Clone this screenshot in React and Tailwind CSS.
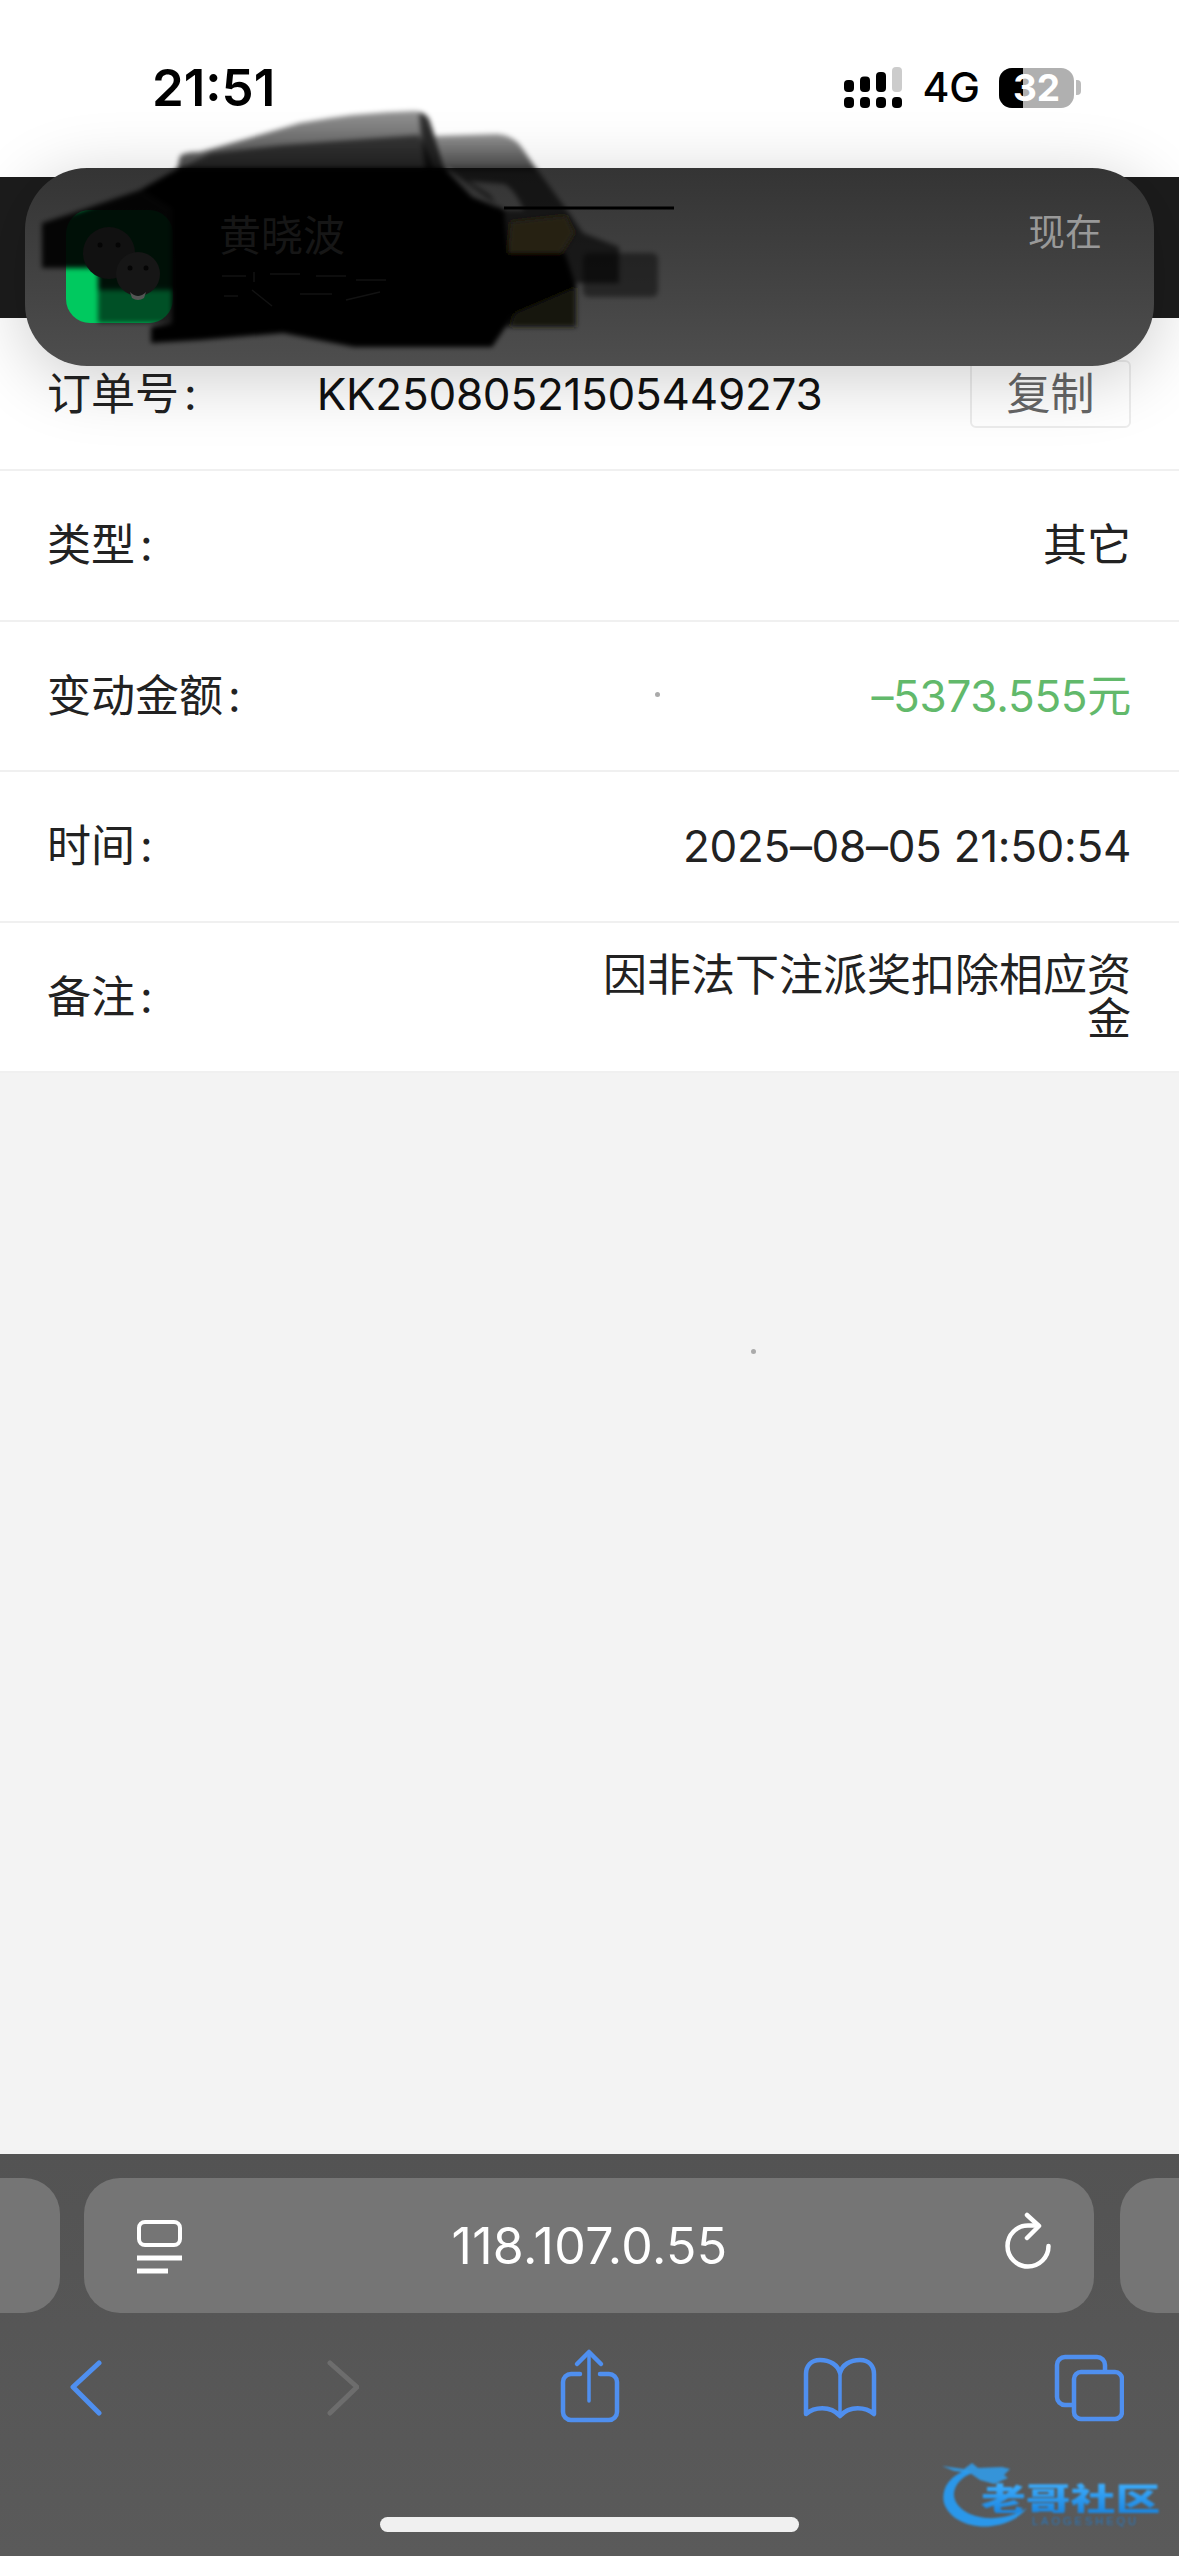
const FONT = "font-['Inter','Noto_Sans_CJK_SC',sans-serif]";

function Row({ label, className = "h-[150.5px]", children }) {
  return (
    <div className={`flex items-center justify-between border-b-[2px] border-[#f0f0f0] bg-white pl-[47px] pr-[48px] ${className}`}>
      <span className="shrink-0 text-[#222]">
        {label}
        <span className="ml-[5px]">:</span>
      </span>
      {children}
    </div>
  );
}

function SignalBars() {
  return (
    <svg width="58" height="41" viewBox="0 0 58 41">
      <rect x="0" y="13" width="10" height="12" rx="4" fill="#000" />
      <rect x="16" y="9.5" width="10" height="15.5" rx="4" fill="#000" />
      <rect x="32" y="5" width="10" height="20" rx="4" fill="#000" />
      <rect x="48" y="0" width="10" height="25" rx="4" fill="#ccc" />
      <rect x="0" y="30" width="10" height="11" rx="4" fill="#000" />
      <rect x="16" y="30" width="10" height="11" rx="4" fill="#000" />
      <rect x="32" y="30" width="10" height="11" rx="4" fill="#000" />
      <rect x="48" y="30" width="10" height="11" rx="4" fill="#000" />
    </svg>
  );
}

// the scribbled-over part of the banner, drawn in page coordinates
function Scribble() {
  return (
    <svg className="absolute left-[-25px] top-[-168px]" width="700" height="370" viewBox="0 0 700 370">
      <defs>
        <filter id="soft" x="-5%" y="-5%" width="110%" height="110%">
          <feGaussianBlur stdDeviation="2.4" />
        </filter>
        <linearGradient id="lobe" x1="0" y1="0" x2="0" y2="1">
          <stop offset="0" stopColor="#000" stopOpacity="0.42" />
          <stop offset="1" stopColor="#000" stopOpacity="0.72" />
        </linearGradient>
      </defs>
      <g filter="url(#soft)">
        <path d="M177 170 L180 156 Q184 152 200 152 Q260 135 300 123 Q360 112 415 111 Q428 112 430 122 L436 140 L446 170 Z" fill="url(#lobe)" />
        <path d="M177 170 L211 153 L283 145 L419 135 L436 170 Z" fill="#000" fillOpacity="0.55" />
        <path d="M419 113 Q428 113 431 125 L445 170 L425 170 Z" fill="#000" fillOpacity="0.65" />
        <path d="M435 136 L497 134 Q515 136 522 148 L537 170 L446 170 Z" fill="url(#lobe)" />
        <path
          fillRule="evenodd"
          d="M446 168 L536 168 L569 213 L583 233 L619 247 L619 283 L576 283 L576 327 L497 327 L504 210 Z M468 181 L505 184 Q515 190 524 210 L500 210 L490 195 Z"
          fill="#000"
          fillOpacity="0.62"
        />
        <path d="M511 222 L566 216 L574 233 L561 253 L508 253 Z" fill="#2a2610" fillOpacity="0.75" />
        <path d="M522 287 L576 287 L576 327 L510 327 Z" fill="#181610" />
        <rect x="583" y="253" width="75" height="44" rx="6" fill="#000" fillOpacity="0.45" />
        <path d="M140 190 L179 168 L444 168 L472 197 L504 210 L508 253 L565 253 L576 287 L515 313 L492 347 L354 347 L283 333 L201 340 L151 343 L151 327 L172 323 L172 210 Z" fill="#000" />
        <path d="M42 223 L70 214 L140 190 L172 210 L172 290 L98 290 L98 268 L42 268 Z" fill="#000" fillOpacity="0.92" />
        <rect x="98" y="290" width="76" height="33" fill="#000" fillOpacity="0.6" />
        <path d="M565 253 L508 253 L440 275 Z" fill="#000" />
      </g>
      {/* wechat-style faces showing through the ink */}
      <circle cx="109" cy="253" r="26" fill="#111" />
      <circle cx="138" cy="274" r="22" fill="#161616" />
      <circle cx="100" cy="245" r="2.5" fill="#050505" />
      <circle cx="118" cy="245" r="2.5" fill="#050505" />
      <circle cx="130" cy="268" r="2.5" fill="#050505" />
      <circle cx="146" cy="268" r="2.5" fill="#050505" />
      <path d="M130 292 Q138 300 146 292 L144 298 Q138 302 132 298 Z" fill="#555" />
      <line x1="504" y1="208" x2="674" y2="208" stroke="#000" strokeWidth="3" />
      <path d="M222 276 H246 M254 272 V282 M270 274 H300 M316 276 H346 M356 280 H386 M224 296 H238 M252 290 L272 306 M300 294 H332 M346 300 L380 292" stroke="#121212" strokeWidth="1.5" fill="none" />
    </svg>
  );
}

function Watermark() {
  return (
    <div className="absolute left-[940px] top-[2460px] h-[72px] w-[225px] blur-[0.8px]">
      <svg className="absolute left-0 top-0" width="90" height="70" viewBox="0 0 90 70">
        {/* dragon body curling round the lettering */}
        <path d="M26 10 C8 17 1 30 4 43 C9 59 30 69 52 66 C68 64 80 57 87 48 C76 55 62 59 46 58 C26 56 13 45 14 33 C15 24 22 17 32 13 Z" fill="#2a97ea" />
        <path d="M2 6 L24 9 L32 3 L38 8 L62 7 L70 9 L64 15 L68 18 L54 24 L40 20 L30 13 L14 11 Z" fill="#2f9ff0" fillOpacity="0.85" />
      </svg>
      <span className="absolute left-[41px] top-[21px] origin-left scale-x-[1.4] whitespace-nowrap bg-gradient-to-b from-[#3fb0ff] to-[#1c86e0] bg-clip-text text-[32px] leading-[32px] font-black text-transparent font-['Noto_Sans_CJK_SC',sans-serif]">
        老哥社区
      </span>
      <span className="absolute left-[92px] top-[54px] text-[11px] leading-[14px] tracking-[3px] text-[#2a76b8] font-['Liberation_Sans',sans-serif]">
        LAOGESHEQU
      </span>
    </div>
  );
}

export default function App() {
  return (
    <div className={`relative flex h-[2556px] w-[1179px] flex-col overflow-hidden bg-[#f3f3f3] text-[44px] leading-[44px] ${FONT}`}>
      {/* status bar */}
      <div className="flex h-[177px] shrink-0 items-start bg-white pl-[152px] pr-[98px] pt-[67px] text-black">
        <span className="text-[51px] leading-[41px] font-semibold">21:51</span>
        <div className="ml-auto flex items-center">
          <SignalBars />
          <span className="ml-[20px] text-[41px] leading-[41px] font-medium">4G</span>
          <div className="relative ml-[19px] flex h-[40px] w-[75px] items-center justify-center rounded-[13px] bg-[#b0b0b0]">
            <div className="absolute inset-y-0 left-0 w-[24px] rounded-l-[13px] bg-black" />
            <span className="relative text-[37px] leading-[40px] font-bold text-white">32</span>
          </div>
          <div className="ml-[2px] h-[15px] w-[5px] rounded-r-[4px] bg-[#bbb]" />
        </div>
      </div>

      {/* page header */}
      <div className="h-[141px] shrink-0 bg-[#1c1c1c]" />

      {/* order details */}
      <div className="shrink-0">
        <Row label="订单号" className="h-[153px]">
          <span className="mr-auto ml-[120px] tracking-[-0.25px] text-[#111]">KK25080521505449273</span>
          <button className="h-[68px] w-[161px] rounded-[6px] border-[2px] border-[#ececec] text-[#666]">复制</button>
        </Row>
        <Row label="类型">
          <span className="text-[#222]">其它</span>
        </Row>
        <Row label="变动金额">
          <span className="tracking-[-0.3px] text-[#62b96b]">–5373.555元</span>
        </Row>
        <Row label="时间">
          <span className="tracking-[-0.3px] text-[#222]">2025–08–05 21:50:54</span>
        </Row>
        <Row label="备注">
          <span className="w-[530px] text-right text-[#222]">因非法下注派奖扣除相应资金</span>
        </Row>
      </div>

      <div className="flex-1" />

      {/* browser toolbar */}
      <div className="flex h-[402px] shrink-0 flex-col bg-gradient-to-b from-[#535353] to-[#5a5a5a] pt-[24px]">
        <div className="flex h-[135px] items-stretch">
          <div className="w-[60px] rounded-r-[36px] bg-[#757575]" />
          <div className="ml-[24px] flex w-[1010px] items-center rounded-[36px] bg-[#757575] pl-[51px] pr-[41px] text-white">
            <svg width="49" height="60" viewBox="0 0 49 60" fill="none" stroke="#fff">
              <rect x="4" y="6" width="41" height="23" rx="6" strokeWidth="4" />
              <path d="M2 42 H47" strokeWidth="5" />
              <path d="M2 55 H33" strokeWidth="5" />
            </svg>
            <span className="flex-1 pr-[8px] text-center text-[50px] leading-[50px] tracking-[0.4px]">118.107.0.55</span>
            <svg width="50" height="68" viewBox="0 0 50 68" fill="none" stroke="#fff" strokeWidth="4.5" strokeLinecap="round" strokeLinejoin="round">
              <path d="M45.5 34 A20.5 20.5 0 1 1 25 13.5 H35" />
              <path d="M24 3 L36 14 L24 26" />
            </svg>
          </div>
          <div className="ml-[26px] flex-1 rounded-l-[36px] bg-[#757575]" />
        </div>

        <div className="mt-[32px] flex h-[80px] items-start pl-[70px]">
          <svg width="32" height="80" viewBox="0 0 32 80" fill="none" stroke="#4f8fef" strokeWidth="5" strokeLinecap="round" strokeLinejoin="round">
            <path d="M29 18 L3 42 L29 68" />
          </svg>
          <svg className="ml-[225px]" width="32" height="80" viewBox="0 0 32 80" fill="none" stroke="#6d6d6d" strokeWidth="5" strokeLinecap="round" strokeLinejoin="round">
            <path d="M3 18 L30 42 L3 68" />
          </svg>
          <svg className="ml-[201px]" width="60" height="80" viewBox="0 0 60 80" fill="none" stroke="#4f8fef" strokeWidth="4.5" strokeLinecap="round" strokeLinejoin="round">
            <path d="M20 29 H11 a8 8 0 0 0 -8 8 V67 a8 8 0 0 0 8 8 H49 a8 8 0 0 0 8 -8 V37 a8 8 0 0 0 -8 -8 H40" />
            <path d="M29 56 V8" strokeWidth="3.5" />
            <path d="M17 19 L29 7 L41 19" />
          </svg>
          <svg className="ml-[182px]" width="75" height="80" viewBox="0 0 75 80" fill="none" stroke="#4f8fef" strokeWidth="4.5" strokeLinejoin="round">
            <path d="M38 28 C36 20 28 15 18 15 C9 15 4 21 4 29 V69 C12 62 28 60 38 71 C48 60 64 62 72 69 V29 C72 21 67 15 58 15 C48 15 40 20 38 28 Z" />
            <path d="M38 28 V71" strokeWidth="3.5" />
          </svg>
          <svg className="ml-[176px]" width="71" height="80" viewBox="0 0 71 80" fill="none" stroke="#4f8fef" strokeWidth="4.5">
            <rect x="21" y="27" width="48" height="47" rx="7" />
            <path d="M52 25 V20 a8 8 0 0 0 -8 -8 H12 a8 8 0 0 0 -8 8 V52 a8 8 0 0 0 8 8 H19" />
          </svg>
        </div>

        <div className="mx-auto mt-[92px] h-[15px] w-[419px] rounded-full bg-[#f0f0f0]" />
      </div>

      {/* stray specks on the page */}
      <div className="absolute left-[655px] top-[692px] h-[5px] w-[5px] rounded-full bg-[#aaa]" />
      <div className="absolute left-[751px] top-[1349px] h-[5px] w-[5px] rounded-full bg-[#aaa]" />

      {/* message banner */}
      <div className="absolute left-[25px] top-[168px] flex h-[198px] w-[1129px] items-start rounded-[62px] bg-gradient-to-b from-[#343434] to-[#4e4e4e] pl-[41px] pr-[52px] pt-[42px] shadow-[0_12px_70px_rgba(0,0,0,0.2)]">
        <div className="h-[113px] w-[107px] shrink-0 rounded-[24px] bg-[#00c95f]" />
        <Scribble />
        <span className="relative ml-[46px] mt-[5px] text-[42px] leading-[42px] text-[#161616]">黄晓波</span>
        <span className="relative ml-auto mt-[4px] text-[37px] leading-[37px] text-[#999]">现在</span>
      </div>

      <Watermark />
    </div>
  );
}
